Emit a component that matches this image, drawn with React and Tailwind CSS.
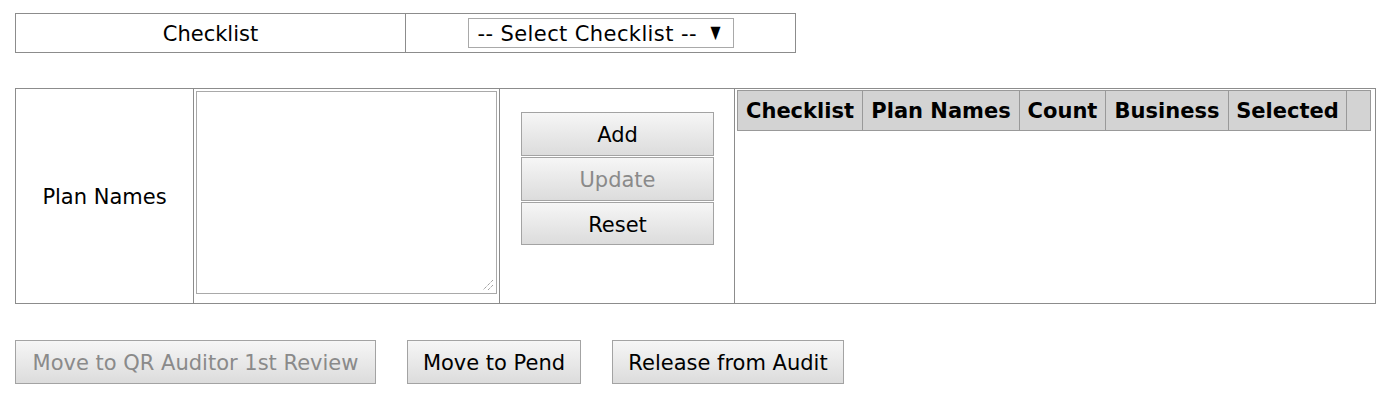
import React from "react";

const font = { fontFamily: '"DejaVu Sans", Verdana, sans-serif' };

function Btn({ children, disabled, className = "" }) {
  return (
    <button
      className={
        "border border-[#a3a3a3] bg-gradient-to-b from-[#f6f6f6] to-[#dcdcdc] text-[21px] leading-none pt-[3px] " +
        (disabled ? "text-[#8a8a8a] " : "text-black ") +
        className
      }
    >
      {children}
    </button>
  );
}

export default function App() {
  return (
    <div className="bg-white w-[1393px] h-[416px] pl-[15px] pt-[13px] text-black" style={font}>
      {/* Checklist row */}
      <div className="flex w-[781px] h-[40px] border border-[#8c8c8c]">
        <div className="w-[390px] flex items-center justify-center border-r border-[#8c8c8c] text-[21px] pt-[4px]">
          Checklist
        </div>
        <div className="flex-1 flex items-center justify-center">
          <div className="w-[266px] h-[30px] border border-[#a9a9a9] flex items-center justify-between pl-[9px] pr-[12px] text-[21px] pt-[3px]">
            <span className="tracking-[0.4px]">-- Select Checklist --</span>
            <span className="text-[13px] mt-[-4px] inline-block scale-y-[1.35]">▼</span>
          </div>
        </div>
      </div>

      {/* Plan names row */}
      <div className="mt-[35px] flex w-[1361px] h-[216px] border border-[#8c8c8c]">
        <div className="w-[178px] flex items-center justify-center border-r border-[#8c8c8c] text-[21px] pt-[4px]">
          Plan Names
        </div>
        <div className="w-[306px] border-r border-[#8c8c8c] pl-[2px] pt-[2px]">
          <div className="relative w-[301px] h-[203px] border border-[#a9a9a9]">
            <svg className="absolute right-[2px] bottom-[2px]" width="12" height="12" viewBox="0 0 12 12">
              <path d="M11 1 L1 11 M11 6 L6 11" stroke="#777" strokeWidth="1" strokeDasharray="1 1" />
            </svg>
          </div>
        </div>
        <div className="w-[235px] border-r border-[#8c8c8c] pl-[21px] pt-[23px] flex flex-col gap-[1px]">
          <Btn className="w-[193px] h-[44px]">Add</Btn>
          <Btn disabled className="w-[193px] h-[44px]">Update</Btn>
          <Btn className="w-[193px] h-[43px]">Reset</Btn>
        </div>
        <div className="flex-1 pl-[2px] pt-[1px]">
          <div className="flex h-[41px] w-[634px] border border-[#999] bg-[#d3d3d3] text-[21px] font-bold">
            <div className="w-[125px] flex items-center justify-center border-r border-[#999] pt-[3px]">Checklist</div>
            <div className="w-[157px] flex items-center justify-center border-r border-[#999] pt-[3px]">Plan Names</div>
            <div className="w-[86px] flex items-center justify-center border-r border-[#999] pt-[3px]">Count</div>
            <div className="w-[123px] flex items-center justify-center border-r border-[#999] pt-[3px]">Business</div>
            <div className="w-[118px] flex items-center justify-center border-r border-[#999] pt-[3px]">Selected</div>
            <div className="flex-1"></div>
          </div>
        </div>
      </div>

      {/* Bottom buttons */}
      <div className="mt-[36px] flex gap-[31px]">
        <Btn disabled className="w-[361px] h-[44px]">Move to QR Auditor 1st Review</Btn>
        <Btn className="w-[174px] h-[44px]">Move to Pend</Btn>
        <Btn className="w-[232px] h-[44px]">Release from Audit</Btn>
      </div>
    </div>
  );
}
